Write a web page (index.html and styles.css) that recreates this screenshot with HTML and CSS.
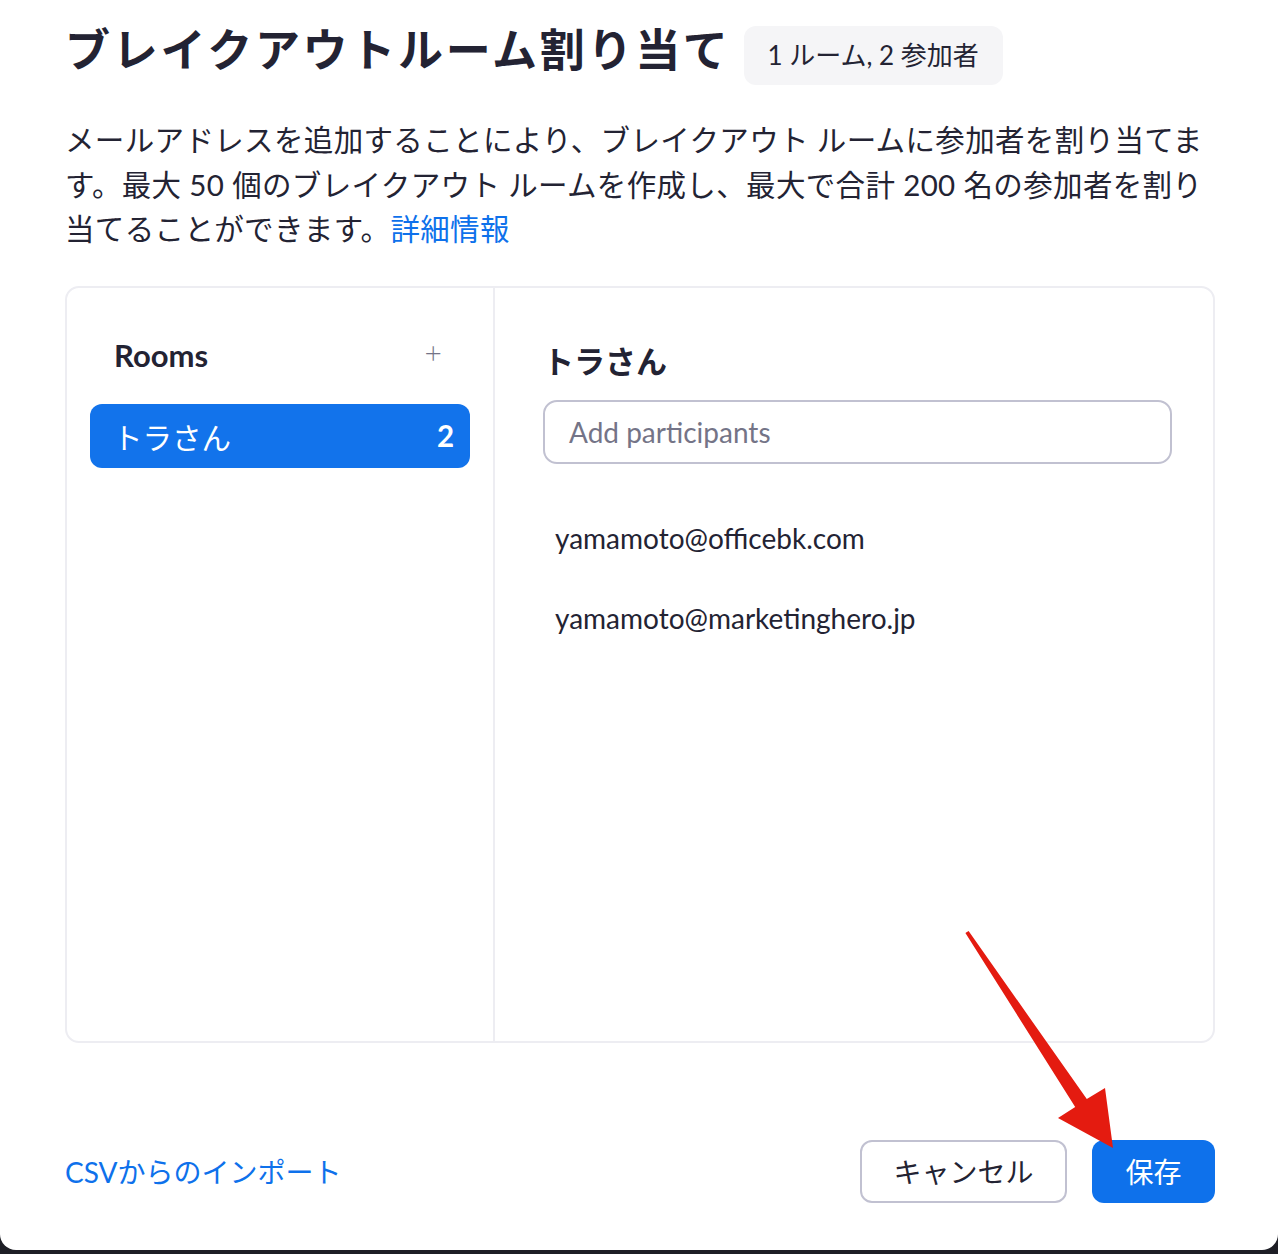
FILE: index.html
```html
<!DOCTYPE html>
<html lang="ja">
<head>
  <meta charset="UTF-8">
  <meta name="viewport" content="width=device-width, initial-scale=1">
  <title>ブレイクアウトルーム割り当て</title>
  <link rel="stylesheet" href="styles.css">
</head>
<body>
  <div class="dialog">
    <div class="header">
      <h1 class="title">ブレイクアウトルーム割り当て</h1>
      <span class="badge">1 ルーム, 2 参加者</span>
    </div>

    <p class="intro">メールアドレスを追加することにより、ブレイクアウト ルームに参加者を割り当てま<br>す。最大 50 個のブレイクアウト ルームを作成し、最大で合計 200 名の参加者を割り<br>当てることができます。<a href="#" class="link">詳細情報</a></p>

    <div class="panel">
      <div class="rooms">
        <div class="rooms-head">
          <span class="rooms-title">Rooms</span>
          <span class="add">+</span>
        </div>
        <div class="room active">
          <span>トラさん</span>
          <span class="count">2</span>
        </div>
      </div>
      <div class="detail">
        <h2 class="room-name">トラさん</h2>
        <div class="search">Add participants</div>
        <ul class="people">
          <li>yamamoto@officebk.com</li>
          <li>yamamoto@marketinghero.jp</li>
        </ul>
      </div>
    </div>

    <div class="footer">
      <a href="#" class="link csv">CSVからのインポート</a>
      <div class="actions">
        <button class="btn cancel">キャンセル</button>
        <button class="btn save">保存</button>
      </div>
    </div>

    <svg class="arrow" width="1278" height="1250" viewBox="0 0 1278 1250">
      <polygon fill="#e41b10" points="965.4,933.1 968.6,930.9 1086.8,1099.1 1105,1088 1113,1148 1058,1118 1075.2,1106.9"/>
    </svg>
  </div>
</body>
</html>
```

FILE: styles.css
```css
* {
  box-sizing: border-box;
}

body {
  margin: 0;
  background: #1d1e25;
  font-family: Lato, "Noto Sans CJK JP", sans-serif;
  color: #232333;
}

.dialog {
  position: relative;
  width: 1278px;
  height: 1250px;
  background: #fff;
  border-radius: 0 0 16px 16px;
  padding: 0 63px 0 65px;
}

.header {
  display: flex;
  align-items: flex-start;
  gap: 13px;
  padding-top: 18px;
}

.title {
  margin: 0;
  font-family: "Noto Sans CJK JP", sans-serif;
  font-size: 45px;
  font-weight: 700;
  letter-spacing: 2.7px;
  line-height: 60px;
  color: #232333;
}

.badge {
  margin-top: 8px;
  height: 59px;
  line-height: 59px;
  padding: 0 24px;
  background: #f5f5f7;
  border-radius: 12px;
  font-size: 26px;
  white-space: nowrap;
}

.intro {
  margin: 33px 0 0;
  font-size: 29.5px;
  letter-spacing: 0.35px;
  line-height: 44.5px;
  white-space: nowrap;
}

.link {
  color: #0e71eb;
  text-decoration: none;
}

.panel {
  display: grid;
  grid-template-columns: 428px 1fr;
  height: 757px;
  margin-top: 34px;
  border: 2px solid #ededf2;
  border-radius: 14px;
}

.rooms {
  border-right: 2px solid #ededf2;
  padding: 49px 23px 0 23px;
}

.rooms-head {
  display: flex;
  justify-content: space-between;
  align-items: center;
  padding: 0 28px 0 24px;
  height: 36px;
}

.rooms-title {
  font-size: 31px;
  font-weight: 700;
}

.add {
  font-size: 30px;
  font-weight: 300;
  color: #747487;
  margin-top: -5px;
}

.room {
  display: flex;
  justify-content: space-between;
  align-items: center;
  height: 64px;
  margin-top: 31px;
  padding: 0 16px 0 23px;
  border-radius: 12px;
  font-size: 29.5px;
}

.room.active {
  background: #1273eb;
  color: #fff;
}

.count {
  font-weight: 700;
}

.detail {
  padding: 52px 41px 0 48px;
}

.room-name {
  margin: 0;
  font-family: "Noto Sans CJK JP", sans-serif;
  font-size: 31px;
  font-weight: 700;
  line-height: 40px;
}

.search {
  margin-top: 20px;
  height: 64px;
  line-height: 60px;
  padding: 0 24px;
  border: 2px solid #c1c1d1;
  border-radius: 14px;
  font-size: 28px;
  color: #747487;
}

.people {
  list-style: none;
  margin: 34px 0 0;
  padding: 0 0 0 12px;
}

.people li {
  height: 80px;
  line-height: 80px;
  font-size: 28px;
}

.footer {
  display: flex;
  justify-content: space-between;
  align-items: center;
  margin-top: 97px;
}

.csv {
  font-size: 28px;
}

.actions {
  display: flex;
  gap: 25px;
}

.btn {
  height: 63px;
  border-radius: 12px;
  font-family: "Noto Sans CJK JP", sans-serif;
  font-size: 28px;
  cursor: pointer;
}

.cancel {
  width: 207px;
  background: #fff;
  border: 2px solid #c1c1d1;
  color: #232333;
}

.save {
  width: 123px;
  background: #0e71eb;
  border: none;
  color: #fff;
}

.arrow {
  position: absolute;
  left: 0;
  top: 0;
  pointer-events: none;
}
```
